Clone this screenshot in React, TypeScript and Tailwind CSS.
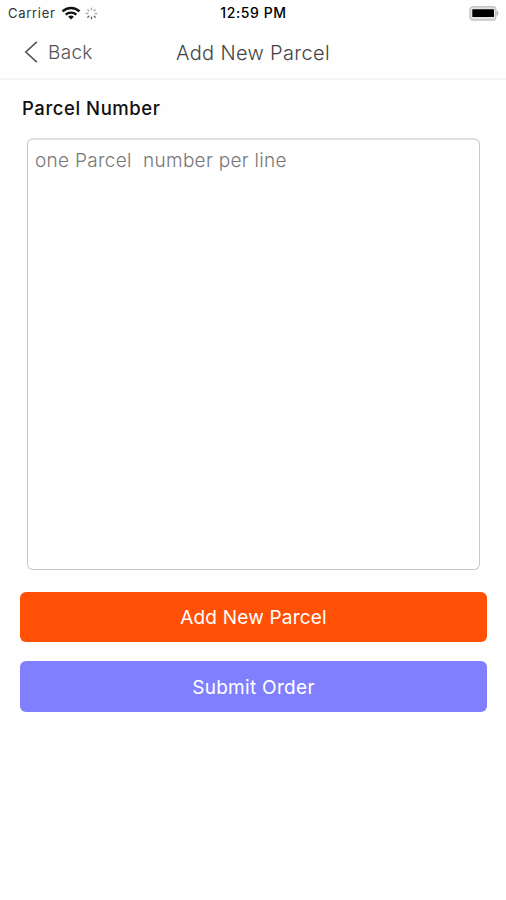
import React from "react";

const StatusBar = () => {
  return (
    <div className="grid grid-cols-3 items-center h-[26px] pl-2 pr-[7px] text-black">
      <div className="flex items-center">
        <span className="text-[13px] leading-4 tracking-[0.7px] text-[#333]">Carrier</span>
        <svg className="ml-[5px] -mt-px" width="20" height="14" viewBox="0 0 20 14" fill="none">
          <path d="M1.5 5.4a12.2 12.2 0 0 1 17 0" stroke="#111" strokeWidth="2.5" />
          <path d="M4.6 8.7a7.8 7.8 0 0 1 10.8 0" stroke="#111" strokeWidth="2.3" />
          <path d="M10 13.6 7.1 10.8a4.2 4.2 0 0 1 5.8 0Z" fill="#111" />
        </svg>
        <svg className="ml-1" width="13" height="13" viewBox="0 0 13 13" fill="none" strokeLinecap="round" strokeWidth="1.4">
          <path d="M6.5 1.2v1.6M10.2 2.8 9.2 3.8M11.8 6.5h-1.6" stroke="#aaa" />
          <path d="M10.2 10.2 9.2 9.2M6.5 11.8v-1.6M2.8 10.2l1-1" stroke="#666" />
          <path d="M1.2 6.5h1.6M2.8 2.8l1 1" stroke="#aaa" />
        </svg>
      </div>
      <span className="text-center text-[14px] leading-4 font-medium tracking-[0.6px]">12:59 PM</span>
      <svg className="justify-self-end" width="30" height="15" viewBox="0 0 30 15">
        <rect x="1" y="0.8" width="25.8" height="13.2" rx="3" fill="#e4e4e4" stroke="#c4c4c4" strokeWidth="1.4" />
        <rect x="3.3" y="3.2" width="21.7" height="7.8" rx="0.5" fill="#000" />
        <path d="M27.6 4.6c2.2.8 2.2 4.6 0 5.4Z" fill="#aaa" />
      </svg>
    </div>
  );
};

const App = () => {
  return (
    <div className="min-h-[900px] w-full bg-[#fefefe] font-['Inter','Liberation_Sans',sans-serif]">
      <StatusBar />
      <div className="grid grid-cols-[1fr_auto_1fr] items-center h-[54px] border-b-2 border-[#f5f5f5] px-6">
        <button className="flex items-center justify-self-start text-[#555]">
          <svg width="14" height="24" viewBox="0 0 14 24" fill="none">
            <path d="M12.8 1.8 1.8 12l11 10.2" stroke="#555" strokeWidth="1.6" />
          </svg>
          <span className="ml-[10px] pt-px text-[19px] leading-6 font-light tracking-[0.3px]">Back</span>
        </button>
        <h1 className="pt-[2px] text-[20px] leading-6 font-light tracking-[0.35px] text-[#444]">Add New Parcel</h1>
      </div>
      <div className="px-5 pt-4">
        <label htmlFor="parcels" className="block ml-[2px] text-[18.5px] leading-6 font-medium tracking-[0.55px] text-[#111]">
          Parcel Number
        </label>
        <textarea
          id="parcels"
          placeholder="one Parcel  number per line"
          className="block mt-[18px] ml-[7px] h-[432px] w-[453px] resize-none rounded-md border border-t-2 border-[#c8c8c8] border-t-[#dedede] bg-white px-[7px] pt-[9px] text-[19px] leading-6 font-light tracking-[0.3px] placeholder:text-[#777] outline-none"
        />
        <button className="block mt-[22px] h-[50px] w-[467px] rounded-md bg-[#ff5005] pt-[3px] text-[19px] tracking-[0.2px] text-white">
          Add New Parcel
        </button>
        <button className="block mt-[19px] h-[51px] w-[467px] rounded-md bg-[#8080ff] pt-[3px] text-[19px] tracking-[0.3px] text-white">
          Submit Order
        </button>
      </div>
    </div>
  );
};

export default App;
